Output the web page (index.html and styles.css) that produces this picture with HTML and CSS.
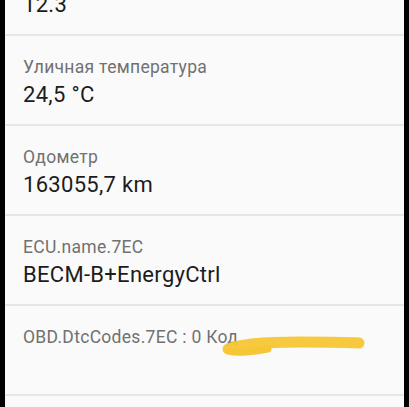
FILE: index.html
```html
<!DOCTYPE html>
<html lang="ru">
<head>
    <meta charset="UTF-8">
    <meta name="viewport" content="width=device-width, initial-scale=1.0">
    <title>OBD</title>
    <link rel="stylesheet" href="styles.css">
</head>
<body>
    <div class="screen">
        <div class="list">
            <div class="row row-cut">
                <div class="value">12.3</div>
            </div>
            <div class="row">
                <div class="label">Уличная температура</div>
                <div class="value">24,5 °C</div>
            </div>
            <div class="row">
                <div class="label">Одометр</div>
                <div class="value">163055,7 km</div>
            </div>
            <div class="row">
                <div class="label">ECU.name.7EC</div>
                <div class="value">BECM-B+EnergyCtrl</div>
            </div>
            <div class="row">
                <div class="label">OBD.DtcCodes.7EC : 0 Код</div>
            </div>
            <div class="row"></div>
        </div>
        <!-- marker scribble over the last row -->
        <svg class="marker" width="409" height="407" viewBox="0 0 409 407">
            <path d="M228 349 C 242 343, 270 342, 300 342 S 345 342, 359 343" fill="none" stroke="#f6c634" stroke-width="11" stroke-linecap="round" opacity="0.95"/>
            <path d="M229 351 C 240 354, 255 351, 268 349" fill="none" stroke="#f6c634" stroke-width="7" stroke-linecap="round"/>
        </svg>
    </div>
</body>
</html>
```

FILE: styles.css
```css
html, body {
    margin: 0;
    padding: 0;
    background: #000;
}

body {
    font-family: Roboto, "Noto Sans", Arial, sans-serif;
    overflow: hidden;
    height: 407px;
}

.screen {
    position: relative;
    margin: 0 5px;
    height: 407px;
    background: #fafafa;
    overflow: hidden;
}

.row {
    box-sizing: border-box;
    height: 90px;
    padding: 21px 18px 0;
    border-bottom: 2px solid #e6e6e6;
}

/* top row scrolled mostly out of view */
.row-cut {
    display: flex;
    flex-direction: column;
    justify-content: flex-end;
    height: 36px;
    padding-top: 0;
    padding-bottom: 16px;
}

.row-cut .value {
    margin-top: 0;
}

.label {
    font-size: 17.5px;
    line-height: 20px;
    letter-spacing: 0.3px;
    color: #717171;
}

.value {
    margin-top: 5px;
    font-size: 22px;
    line-height: 26px;
    letter-spacing: 0.3px;
    color: #1c1c1c;
}

.marker {
    position: absolute;
    left: -5px;
    top: 0;
    pointer-events: none;
}
```
